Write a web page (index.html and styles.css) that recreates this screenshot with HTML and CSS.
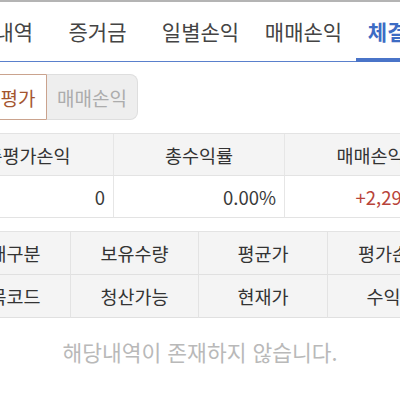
FILE: index.html
```html
<!DOCTYPE html>
<html lang="ko">
<head>
<meta charset="utf-8">
<link rel="stylesheet" href="styles.css">
</head>
<body>
<div class="page">
  <nav class="tabs">
    <div class="tab">잔고내역</div>
    <div class="tab">증거금</div>
    <div class="tab">일별손익</div>
    <div class="tab">매매손익</div>
    <div class="tab active">체결내역</div>
  </nav>
  <div class="segment">
    <div class="seg on">잔고평가</div>
    <div class="seg off">매매손익</div>
  </div>
  <div class="summary">
    <div class="cell head">총평가손익</div>
    <div class="cell head">총수익률</div>
    <div class="cell head">매매손익</div>
    <div class="cell val">0</div>
    <div class="cell val">0.00%</div>
    <div class="cell val up">+2,290,000</div>
  </div>
  <div class="cols">
    <div class="hc">매매구분</div>
    <div class="hc">보유수량</div>
    <div class="hc">평균가</div>
    <div class="hc">평가손익</div>
    <div class="hc">종목코드</div>
    <div class="hc">청산가능</div>
    <div class="hc">현재가</div>
    <div class="hc">수익률</div>
  </div>
  <div class="empty">해당내역이 존재하지 않습니다.</div>
</div>
</body>
</html>
```
FILE: styles.css
```css
html, body {
  margin: 0;
  padding: 0;
  background: #fff;
  overflow: hidden;
}
body {
  font-family: "Noto Sans CJK KR", "Noto Sans", sans-serif;
  color: #333;
  border-top: 2px solid #b4b4b4;
}
.page {
  width: 514px;
  margin-left: -57px;
}
.tabs {
  display: flex;
  height: 59px;
  border-bottom: 1px solid #5a80cc;
}
.tab {
  position: relative;
  flex: 0 0 103px;
  display: flex;
  align-items: center;
  justify-content: center;
  font-size: 21px;
  color: #444;
  padding-bottom: 1px;
  white-space: nowrap;
}
.tab.active {
  color: #3d6cc4;
  font-weight: bold;
}
.tab.active::after {
  content: "";
  position: absolute;
  left: 1px;
  right: 0;
  bottom: -1px;
  height: 4px;
  background: #4a74c8;
}
.segment {
  display: flex;
  margin-top: 12px;
  padding-left: 11px;
}
.seg {
  box-sizing: border-box;
  height: 46px;
  display: flex;
  align-items: center;
  justify-content: center;
  font-size: 19px;
  white-space: nowrap;
}
.seg.on {
  width: 93px;
  border: 1px solid #caa38e;
  border-radius: 4px 0 0 4px;
  color: #a4552f;
  background: #fff;
}
.seg.off {
  width: 91px;
  border: 1px solid #dedede;
  border-left: none;
  border-radius: 0 8px 8px 0;
  background: #eeeeee;
  color: #acacac;
}
.summary {
  display: grid;
  grid-template-columns: 171px 171px 172px;
  margin-top: 13px;
  border-top: 1px solid #e3e3e3;
}
.cell {
  box-sizing: border-box;
  height: 42px;
  border-bottom: 1px solid #e3e3e3;
  border-right: 1px solid #e6e6e6;
  display: flex;
  align-items: center;
  font-size: 18.5px;
  color: #333;
  white-space: nowrap;
}
.cell.head {
  background: #f4f4f4;
  justify-content: center;
}
.cell.val {
  justify-content: flex-end;
  padding-right: 8px;
  color: #3a3a3a;
}
.cell.up {
  color: #b8443a;
}
.cols {
  display: grid;
  grid-template-columns: 128px 128px 129px 129px;
  margin-top: 13px;
  border-top: 1px solid #e3e3e3;
  background: #f4f4f4;
}
.hc {
  box-sizing: border-box;
  height: 43px;
  border-bottom: 1px solid #e0e0e0;
  border-right: 1px solid #e3e3e3;
  display: flex;
  align-items: center;
  justify-content: center;
  font-size: 18.5px;
  color: #333;
  white-space: nowrap;
}
.empty {
  height: 68px;
  line-height: 68px;
  text-align: center;
  font-size: 21.5px;
  color: #b9b9b9;
  white-space: nowrap;
}
```
